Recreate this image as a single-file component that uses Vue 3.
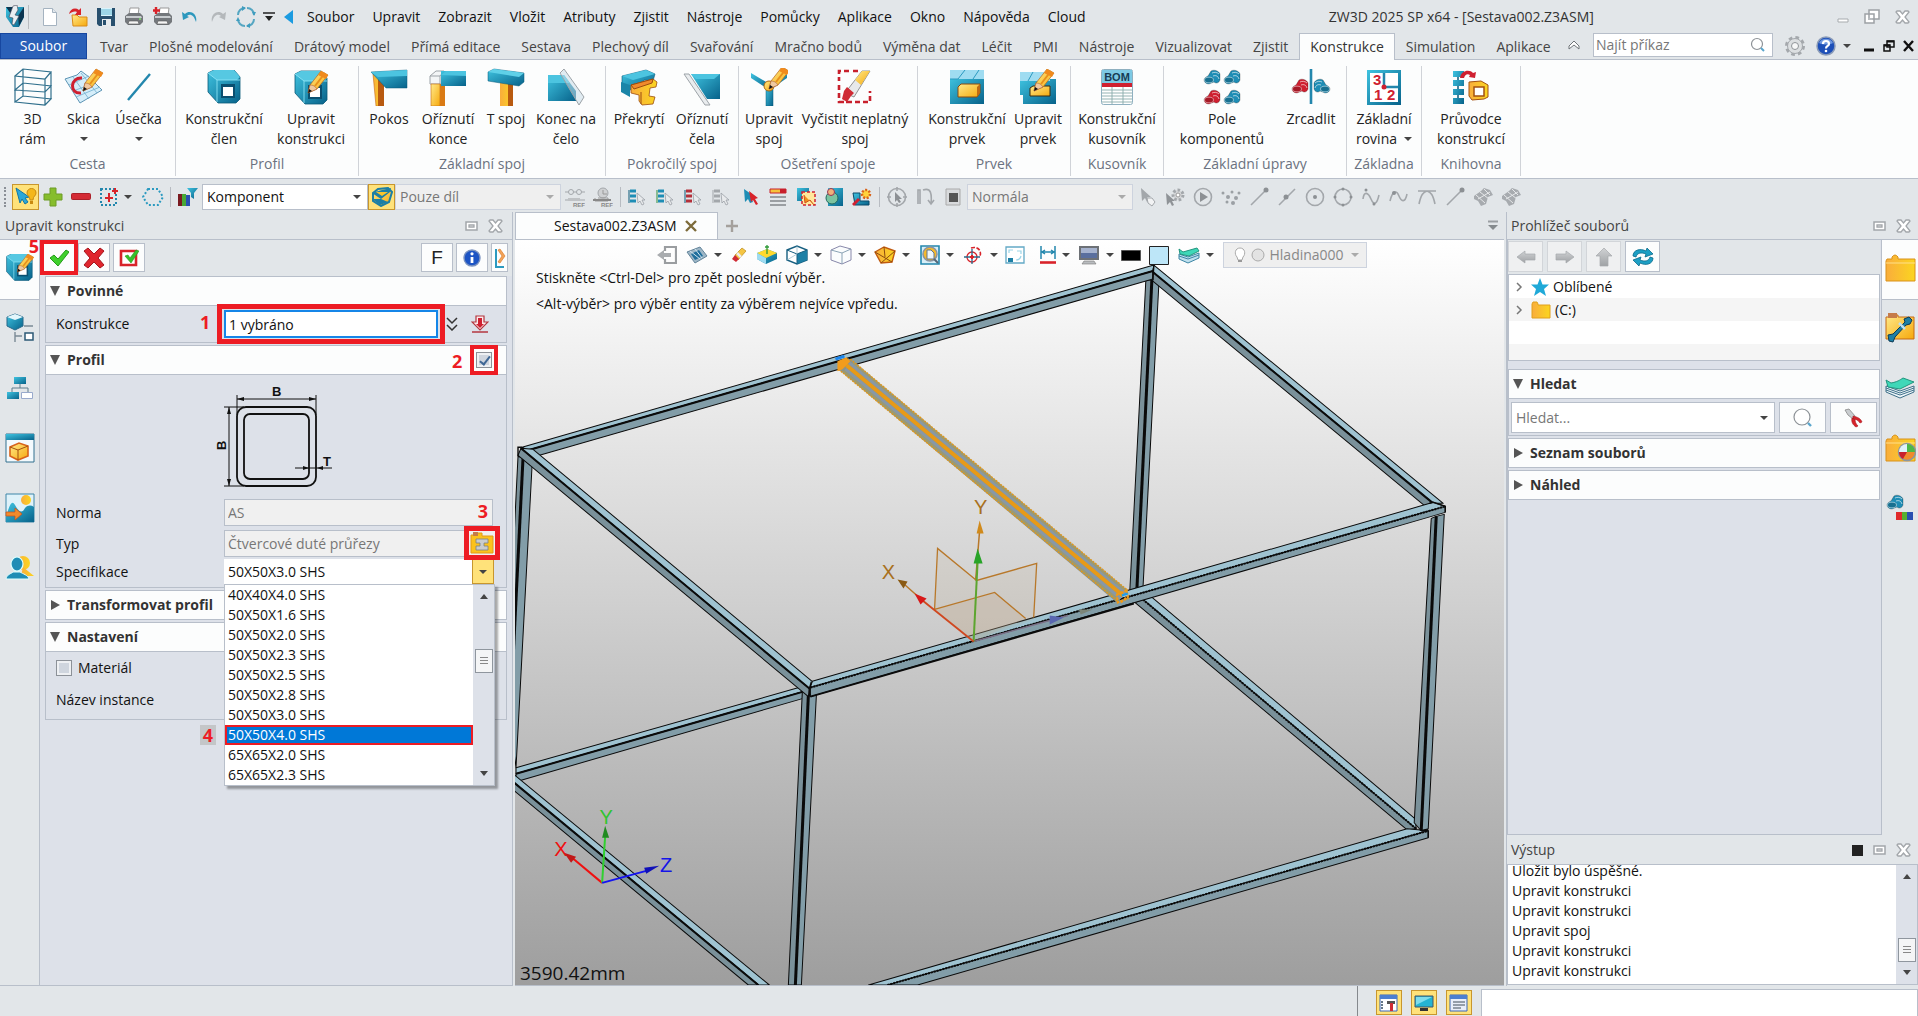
<script setup>
import { h } from 'vue'

const C = 'fill="url(#gc)"'
const Y = 'fill="url(#gy)"'
const O = 'fill="url(#go)"'
const G = 'fill="url(#gg)"'
const pencil = (x, y) => `<g transform="translate(${x} ${y})"><path d="M0 20l2-8L13-2l7 4-11 14z" fill="url(#gy)" stroke="#b5651d" stroke-width=".7"/><path d="M7 13L17 0" stroke="#e8901c" stroke-width="2"/><path d="M13-2l7 4-2 4-8-4z" fill="#f08a1c"/><path d="M0 20l2-8c3 0 5 1 7 4z" fill="#f0c9a0" stroke="#a0522d" stroke-width=".5"/><path d="M0 20l1-4 3 2z" fill="#111"/></g>`
const cube = `<path d="M2 3l6-3h20l6 7v22l-4 4H12L2 22z" fill="url(#gc)" stroke="#0b5a7a" stroke-width=".8"/><path d="M2 3l6-3h20l6 7-3 3H11z" fill="#56c8e2"/><path d="M2 3l9 7v22M11 10h23" fill="none" stroke="#8be3f5" stroke-width=".9"/><path d="M15 14h14v14H15z" fill="#0a4f70"/><path d="M17 17h10v9H17z" fill="#fff"/>`
const bolt = (x, y, f) => `<g transform="translate(${x} ${y})"><path d="M7 1c3-2 8 0 9 3v6c-1 3-4 4-6 2l-5 2c-3 0-5-2-5-4s2-3 4-4z" fill="${f}" stroke="#0006" stroke-width=".6"/><ellipse cx="5" cy="10" rx="4.500" ry="2.800" fill="#0003" stroke="#fff9" stroke-width=".8"/><path d="M8 3c2-1 5-1 7 1M9 6c3-1 5 0 6 3" stroke="#fff9" fill="none"/></g>`
const tree = (a, b) => `<g stroke="${a}" stroke-width="3"><path d="M2 4h6M2 9h6M2 14h6"/></g><path d="M1 3v13" stroke="${b}"/><path d="M9 6l1 10 2-2 2 4 2-1-2-4h3z" fill="#e8eaec" stroke="#9aa0a6" stroke-width=".8"/>`
const g = 'fill="none" stroke="#a3a7ab" stroke-width="1.6"'
const folder = `<path d="M1 7l1-2h5V3q3-4 6 0v2h17v22H1z" ${O} stroke="#d9921a" stroke-width="1"/><path d="M1 9h29" stroke="#ffe08a"/>`
const mesh = `<path d="M1 9l7-5 3-3 6 2 3 5-5 2-2 7-5 2-3-5-4-2z" fill="#a7abaf"/><path d="M3 8l9 8M7 5l9 7M11 2l6 6M5 12l12-7" stroke="#e6e8ea"/>`

const icons = {
  logo: [20, 24, `<path d="M1 2h18v10l-5 10H8L1 12z" ${C}/><path d="M1 2h7l3 4-3 6zM19 2l-6 9 1 10 5-9z" fill="#0b3550"/><path d="M8 1l4-1 1 5-3 5 4 1-5 9-2-1 1-6-4-1z" fill="#e9eef2" stroke="#445" stroke-width=".6"/>`],
  file: [14, 18, '<path d="M.5.5h9l4 4v13H.5z" fill="#fff" stroke="#a5b3c0"/><path d="M9.500.5v4h4" fill="#e4e9ee" stroke="#a5b3c0"/>'],
  open: [20, 20, `<path d="M4 8h5l2 2h8v9H5z" ${Y} stroke="#d98b18"/><path d="M1 7C2 2 7 0 11 3l2-2v7H7l2-3C6 4 4 5 1 7z" fill="#d8232a"/>`],
  save: [20, 20, `<path d="M1 1h18v18H3l-2-2z" fill="#28506e"/><path d="M5 1h11v8H5z" fill="#d9f3fb"/><path d="M5 3h11M5 5h11M5 7h11" stroke="#63b9d4"/><path d="M6 12h9v7H6z" fill="#e6eaed"/><path d="M7 13h3v5H7z" fill="#28506e"/>`],
  print: [20, 20, '<path d="M6 1h9l-1 7H5z" fill="#fff" stroke="#999"/><path d="M1 9l4-3h11l3 3v6l-3 3H4l-3-3z" fill="#74787c"/><path d="M2 9h15l1 2H2z" fill="#c9cdd0"/><path d="M5 14h9l1 3H4z" fill="#f5f5f5" stroke="#555" stroke-width=".6"/><circle cx="16" cy="12" r="1" fill="#7be06d"/>'],
  printadd: [21, 20, '<path d="M8 1h9l-1 7H7z" fill="#fff" stroke="#999"/><path d="M2 9l4-3h11l3 3v6l-3 3H5l-3-3z" fill="#74787c"/><path d="M3 9h15l1 2H3z" fill="#c9cdd0"/><path d="M6 14h9l1 3H5z" fill="#f5f5f5" stroke="#555" stroke-width=".6"/><path d="M4 0v7M1 3.500h7" stroke="#d8232a" stroke-width="2.400"/>'],
  undo: [18, 14, '<path d="M1 2l1 8 6-3-2-1c3-3 7-1 9 6 2-8-6-13-11-8z" fill="#2d98bd"/>'],
  redo: [18, 14, '<path d="M17 2l-1 8-6-3 2-1C9 3 5 5 3 12 1 4 9-1 14 4z" fill="#b4b8bb"/>'],
  sync: [22, 22, '<path d="M3 9C3 5 6 2 10 2M12 2c4 0 7 3 7 7M19 13c0 4-3 7-7 7M10 20c-4 0-7-3-7-7" fill="none" stroke="#55a6c2" stroke-width="2"/><path d="M7 0l4 2-4 3zM17 6l4 0-2 4zM15 17l-4 3 4 2zM1 15l4 0-2-4z" fill="#3f9dbf"/>'],
  qat: [12, 10, '<path d="M0 1h12" stroke="#222" stroke-width="1.500"/><path d="M2 4h8l-4 5z" fill="#222"/>'],
  tri: [10, 14, '<path d="M9 0v14L0 7z" fill="#1b9be0"/>'],
  wmin: [12, 14, '<path d="M1 9h10v3H1z" fill="#fff" stroke="#a7abae"/>'],
  wrest: [16, 16, '<path d="M5 1h10v9H5zM1 5h9v9H1z" fill="#fff" stroke="#9da1a5" stroke-width="1.500"/><path d="M4 9h4v2H4z" fill="#b9bdc1"/>'],
  x3: [15, 14, '<path d="M2 1h3l2.500 3L10 1h3l1 1-4 5 4 5-1 1h-3l-2.500-3L5 13H2l-1-1 4-5-4-5z" fill="#fff" stroke="#a2a6aa" stroke-width="1.300"/>'],
  dock: [13, 10, '<path d="M1 1h11v8H1z" fill="#fff" stroke="#a2a6aa" stroke-width="1.500"/><path d="M4 4h5v2H4z" fill="none" stroke="#a2a6aa" stroke-width="1.300"/>'],
  stop: [11, 11, '<path d="M0 0h11v11H0z" fill="#222"/>'],
  up: [14, 14, '<path d="M2 7l5-5 5 5v3L7 6l-5 4z" fill="#fff" stroke="#6f7478"/>'],
  lens: [16, 16, '<circle cx="7" cy="7" r="5.500" fill="#fff" stroke="#8d9297" stroke-width="1.200"/><path d="M11 11l3 3" stroke="#5aa5cc" stroke-width="2"/>'],
  lens2: [20, 20, '<circle cx="9" cy="9" r="8" fill="#fff" stroke="#8d9297" stroke-width="1.200"/><path d="M15 15l3 3" stroke="#5aa5cc" stroke-width="2.400"/>'],
  gear: [22, 22, '<circle cx="11" cy="11" r="8.500" fill="none" stroke="#a4a8ac" stroke-width="3" stroke-dasharray="3.600 3.100"/><circle cx="11" cy="11" r="7.500" fill="#dcdfe1" stroke="#a4a8ac"/><circle cx="11" cy="11" r="3.500" fill="#f6f7f7" stroke="#8f9498"/>'],
  help: [20, 20, '<circle cx="10" cy="10" r="9" fill="#1d4fb8" stroke="#8a9bb8" stroke-width="1.500"/><path d="M3 7a8 8 0 0 1 14 0c-4 2-10 2-14 0z" fill="#6f98e0"/><path d="M7 8c0-4 6-4 6 0 0 2-3 2-3 4.500" fill="none" stroke="#fff" stroke-width="2.200"/><circle cx="10" cy="15" r="1.300" fill="#fff"/>'],
  bmin: [12, 14, '<path d="M1 11h10" stroke="#111" stroke-width="3"/>'],
  brest: [12, 14, '<path d="M4 2h7v6H4zM1 6h6v6H1z" fill="#e2e6e9" stroke="#111" stroke-width="1.500"/><path d="M4 2.500h7M1 6.500h6" stroke="#111" stroke-width="2"/>'],
  bx: [12, 12, '<path d="M1 1l9 10M10 1L1 11" stroke="#111" stroke-width="2.400"/>'],

  r3d: [38, 38, '<path d="M1 8l8-7 28 3-6 7zM1 22l30 2 6-6-28-3zM1 34l30 3 6-6-28-3zM1 8v26M31 11v26M37 4v27M9 1v27" fill="none" stroke="#2f6f8c" stroke-width="1.200"/>'],
  rsk: [40, 38, `<path d="M1 11l12-4 4-4 8 6 13 13-22 13z" fill="#d5eefa" stroke="#5e95b5"/><path d="M5 17l20-9M9 23l22-8M12 29l24-10M9 9l16 22M17 5l16 20" stroke="#7cb6d3" stroke-width=".9"/><path d="M18 10c-12-1-13 16-1 15" fill="none" stroke="#cf2030" stroke-width="3"/>${pencil(19, 3)}`],
  rln: [26, 30, '<path d="M2 28L24 2" stroke="#2387ad" stroke-width="2.400"/>'],
  rmb: [36, 34, cube],
  red: [36, 36, `<g transform="translate(0 2)">${cube}</g>${pencil(15, 4)}`],
  rpk: [38, 38, `<path d="M3 6l3-2 7 7v27H6z" ${O} stroke="#c56a14" stroke-width=".6"/><path d="M8 8l6 5v25H8z" fill="#b85a10"/><path d="M1 4l36-2v18H16z" ${C} stroke="#0b5a7a" stroke-width=".5"/><path d="M1 4l36-2v6L8 9z" fill="#4cc4e0"/>`],
  roz: [38, 38, `<path d="M1 8l6-5h8v13H1z" fill="#f3f5f6" stroke="#9da3a8"/><path d="M1 8h10v8M11 8l4-5" fill="none" stroke="#9da3a8"/><path d="M2 16h9v22H2z" ${Y} stroke="#c56a14" stroke-width=".6"/><path d="M11 16h5v22h-5z" fill="#d97a14"/><path d="M12 3h25v15H12z" ${C}/><path d="M12 7l5-4h20v5z" fill="#4cc4e0"/>`],
  rt: [38, 38, `<path d="M13 14h13v24H13z" ${O}/><path d="M21 14h5v24h-5z" fill="#b85a10"/><path d="M1 4l6-3 30 4v9l-5 4-31-5z" ${C} stroke="#0b5a7a" stroke-width=".5"/><path d="M1 4l6-3 30 4-5 4z" fill="#5fd0e8"/>`],
  rkc: [38, 38, `<path d="M1 7h16l12 16v10H1z" ${C}/><path d="M1 7h16l6 8H1z" fill="#4cc4e0"/><path d="M13 5l4-4 20 28-5 8z" fill="#c6dbe688" stroke="#9da3a8"/>`],
  rpr: [38, 38, `<path d="M2 8l24-6 9 4-2 7-9-1-1 14-9-3-12-4z" ${C} stroke="#0b5a7a" stroke-width=".6"/><path d="M2 8l24-6 9 4-22 6z" fill="#4cc4e0"/><path d="M1 14l9 3v12L1 24z" fill="#1b85a8"/><path d="M11 17l22-6 4 3-1 5-6 1-1 8 6 1-2 7-11 1-3-4v-6l-8-2z" ${O} stroke="#9c4c10" stroke-width=".8"/><path d="M11 17l22-6-1 4-18 6zM21 24v12" stroke="#9c4c10" fill="#f08a2c"/>`],
  roc: [38, 38, `<path d="M8 6h29v25H24z" ${C}/><path d="M8 6h29l-6 5H13z" fill="#4cc4e0"/><path d="M1 6h5l21 31h-5z" fill="#e3e7eacc" stroke="#9da3a8"/>`],
  rus: [38, 38, `<path d="M1 5l17 10v6L1 10z" ${C}/><path d="M37 5L21 15v6l16-11z" ${C}/><path d="M16 18h7v20h-7z" ${C} stroke="#0b5a7a" stroke-width=".5"/><circle cx="19" cy="18" r="5" ${Y} stroke="#a96512"/>${pencil(19, 1)}`],
  rvy: [36, 36, `<path d="M12 2H2v10M2 16v17h10M2 33h31V22M16 2h8" fill="none" stroke="#c8202c" stroke-width="2.600" stroke-dasharray="5 3"/><path d="M8 24L25 2h8L17 28z" fill="#e7e9ea" stroke="#777" stroke-width=".8"/><path d="M18 11l7-9h8l-9 14z" ${Y}/><path d="M7 22l3-4 7 6-3 3-4 6-5-3z" fill="#cf2b34"/>`],
  rkp: [36, 36, `<path d="M1 8h34v27H1z" ${C}/><path d="M1 1h34v9H1z" fill="#9fdcf1"/><path d="M16 1L9 10H1M30 1l-6 9" stroke="#2b9ac0" fill="none"/><path d="M9 18l3-3h19v9l-3 4H9z" ${Y} stroke="#8a4a10"/><path d="M28 18v10l3-4v-9z" fill="#c06a12"/>`],
  rup: [38, 36, `<path d="M1 10h36v25H4v-9H1z" ${C}/><path d="M1 3h30v9H1z" fill="#9fdcf1"/><path d="M14 3L9 12" stroke="#2b9ac0"/><path d="M11 19l3-2h17v10H11z" ${Y} stroke="#3b2b10"/>${pencil(15, 2)}`],
  rbom: [32, 36, '<rect x=".5" y=".5" width="31" height="35" rx="2" fill="#fff" stroke="#8fb0c0"/><path d="M1 1h30v13H1z" fill="#7cc9e4"/><text x="16" y="12" font-family="Liberation Sans" font-size="11" font-weight="700" text-anchor="middle" fill="#173c55">BOM</text><path d="M1 14h30v4H1z" fill="#cf2030"/><path d="M1 21h30M1 24h30M1 27h30M1 30h30M1 33h30M11 18v17M22 18v17" stroke="#8aa" stroke-width=".9"/>'],
  rpo: [38, 36, bolt(1, 1, '#1e8db5') + bolt(21, 1, '#1e8db5') + bolt(1, 21, '#cf2030') + bolt(21, 21, '#1e8db5')],
  rzr: [40, 36, bolt(1, 10, '#cf2030') + '<g transform="translate(40 0) scale(-1 1)">' + bolt(1, 10, '#1e8db5') + '</g><path d="M20 0v35" stroke="#2387ad" stroke-width="2.600"/>'],
  rzk: [36, 36, `<path d="M1 1h34v35H1z" ${C}/><path d="M4 4h28v29H4z" fill="#fff"/><path d="M18 4v14h14" fill="none" stroke="#2387ad" stroke-width="2.500"/><g font-family="Liberation Sans" font-weight="700" font-size="15" fill="#cf2030"><text x="7" y="16">3</text><text x="8" y="31">1</text><text x="21" y="31">2</text></g><circle cx="18" cy="18" r="2.500" fill="#cf2030"/>`],
  rpv: [38, 36, `<path d="M6 2v32" stroke="#0b5a7a" stroke-width="1.500"/><path d="M1 2h11v6H1zM1 11h11v6H1zM1 20h11v6H1zM1 29h11v6H1z" ${C}/><path d="M8 9C9 1 18 0 21 4l3-1-1 6-6-1 1-2c-3-2-5 0-6 3z" fill="#cf2030"/><path d="M17 13l12-1 7 4v12l-4 2-12 1-3-4z" ${O} stroke="#a3500f"/><path d="M22 18h10v9H22z" fill="#fff" stroke="#a3500f" stroke-width="1.500"/>`],

  t1: [22, 20, `<path d="M1 1l4 15 2-4 3 5 3-2-3-4 4-1z" fill="#2aa7d8" stroke="#1377a4"/><path d="M12 6c0-6 9-6 9 0 0 3-3 3-3 7h-3c0-4-3-4-3-7z" fill="#f4b71b" stroke="#c98a10"/><path d="M15 14h3v3h-3z" fill="#c98a10"/>`],
  plus: [20, 20, '<path d="M7 1h6v6h6v6h-6v6H7v-6H1V7h6z" fill="#86bd2c" stroke="#6d9c26"/>'],
  minus: [20, 8, '<rect x=".5" y=".5" width="19" height="6" rx="1" fill="#d42b35" stroke="#ab2029"/>'],
  sel: [20, 20, '<path d="M2 2h15v16H2z" fill="none" stroke="#2387ad" stroke-width="2" stroke-dasharray="2 2"/><path d="M10 6v9M6 11h8M16 1v6M13 4h6" stroke="#d8232a" stroke-width="2"/>'],
  hex: [22, 20, '<path d="M6 2h10l5 8-5 8H6l-5-8z" fill="none" stroke="#2b9ac0" stroke-width="2" stroke-dasharray="2 2"/>'],
  filt: [22, 20, `<path d="M1 7h5v12H1z" fill="#7a1a20"/><path d="M5 7h4v12H5z" fill="#49a835"/><path d="M9 8h4v11H9z" fill="#2a4fb0"/><path d="M10 1h11l-4 5v6l-3-2V6z" ${C}/>`],
  part: [22, 20, `<path d="M2 6l5-4 10-1 4 4-3 10-8 4-8-5z" ${Y} stroke="#1d7fa5" stroke-width="2"/><path d="M1 6l9 6 9-7 1-4-9 2zM1 12l8 6 8-3-7-3z" fill="#1d7fa5"/><path d="M5 5l6 4 6-4" fill="#f9c52c"/>`],
  ref1: [20, 20, '<path d="M0 5h20M0 13h20" stroke="#a3a7ab"/><circle cx="6" cy="5" r="2.500" fill="#e2e6e9" stroke="#a3a7ab"/><circle cx="14" cy="5" r="2.500" fill="#e2e6e9" stroke="#a3a7ab"/><text x="8" y="20" font-size="6" font-weight="700" font-family="Liberation Sans" fill="#888">REF</text><path d="M3 11h12v3H3z" fill="#bfc2c5"/>'],
  ref2: [20, 20, '<circle cx="10" cy="6" r="5" fill="#cfd1d3" stroke="#a3a7ab"/><path d="M10 3v4h4M5 11h10v3H2v-3" stroke="#999" fill="none"/><path d="M0 13h18" stroke="#888" stroke-width="2"/><text x="8" y="20" font-size="6" font-weight="700" font-family="Liberation Sans" fill="#888">REF</text>'],
  k1: [20, 20, tree('#1e8db5', '#0b5a7a')], k2: [20, 20, tree('#1e8db5', '#2f8f3a')], k3: [20, 20, tree('#b4303a', '#0b5a7a')], k4: [20, 20, tree('#a3a7ab', '#a3a7ab')],
  ptr: [20, 20, '<path d="M4 2l1 13 3-3 2 4 3-1-2-5 3-1z" fill="#1e8db5"/><path d="M9 4l2 11 2-2 3 5 2-1-3-5 3-1z" fill="#d8232a"/>'],
  lst: [18, 18, '<path d="M1 1h16v4H1z" fill="#f6c33b" stroke="#c8202c"/><path d="M11 1h6v4h-6z" fill="#c8202c"/><path d="M1 9h16M1 13h16M1 17h16" stroke="#9a9ea2" stroke-width="2"/>'],
  s1: [20, 20, `<path d="M1 1h12v13H1z" ${C}/><path d="M6 5h13v13H6z" fill="#ffe79b" stroke="#cf2030" stroke-dasharray="3 2" stroke-width="1.500"/><path d="M8 8l1 8 5-3 4 5" fill="#f0921c" stroke="#cf5020"/>`],
  s2: [20, 20, `<path d="M4 1h15v18H4z" ${C}/><circle cx="8" cy="11" r="6" fill="#7cc4a0" stroke="#22695f"/><circle cx="7" cy="5" r="3.500" fill="#f1b27a" stroke="#935"/>`],
  s3: [20, 20, `<path d="M1 6h7v8h9v4H3z" ${C} stroke="#0b4a6a"/><path d="M1 18l6-6" stroke="#cf2030" stroke-width="3"/><circle cx="14" cy="7" r="4" fill="#ffd23b" stroke="#d8631b" stroke-width="2.500" stroke-dasharray="2 1.500"/>`],
  g1: [22, 22, `<circle cx="11" cy="11" r="8.500" ${g}/><path d="M11 1v4M11 17v4M1 11h4M17 11h4" ${g}/><path d="M9 6v10l2-2 2 3 2-1-2-3h3z" fill="#8c9094"/>`],
  g2: [20, 20, `<path d="M3 17V3h2v14M8 3c8-3 9 4 8 14M13 13l3 4 3-4" ${g}/>`],
  g3: [18, 18, '<path d="M2 1h14v16H2z" fill="#d8dadc" stroke="#aaa"/><path d="M5 5h9v9H5z" fill="#555"/>'],
  g4: [20, 20, '<path d="M4 1l1 13 3-3 2 4 2-1-2-4h4z" fill="#a3a7ab"/><path d="M10 11l5 0 3 4-3 4-4-3z" fill="#f2f3f4" stroke="#a3a7ab"/>'],
  g5: [22, 20, '<path d="M2 6l1 12 3-3 2 4 2-1-2-4h3z" fill="#8f9397"/><circle cx="14" cy="8" r="5" fill="#d5d7d9" stroke="#a3a7ab" stroke-width="3" stroke-dasharray="2.500 2"/><circle cx="14" cy="8" r="2" fill="#fff" stroke="#999"/>'],
  g6: [20, 20, `<circle cx="10" cy="10" r="8.500" ${g}/><path d="M7 5l8 5-8 5z" fill="#8c9094"/>`],
  g7: [20, 20, '<g fill="#9ba0a4"><circle cx="2" cy="6" r="1.500"/><circle cx="7" cy="10" r="2"/><circle cx="11" cy="5" r="1.500"/><circle cx="18" cy="6" r="1.500"/><circle cx="15" cy="11" r="2"/><circle cx="12" cy="16" r="2"/><circle cx="6" cy="15" r="1.500"/></g>'],
  g8: [20, 20, `<path d="M2 18L18 2" ${g}/><circle cx="17" cy="3" r="2.500" fill="#8c9094"/>`],
  g9: [20, 20, `<path d="M2 18L18 2" ${g}/><circle cx="9" cy="10" r="2.500" fill="#8c9094"/>`],
  g10: [20, 20, `<circle cx="10" cy="10" r="8.500" ${g}/><circle cx="10" cy="10" r="2" fill="#8c9094"/>`],
  g11: [20, 20, `<circle cx="10" cy="10" r="8" ${g}/><g fill="#8c9094"><circle cx="10" cy="2" r="1.500"/><circle cx="10" cy="18" r="1.500"/><circle cx="2" cy="10" r="1.500"/><circle cx="18" cy="10" r="1.500"/></g>`],
  g12: [20, 20, `<path d="M2 12c1-8 5-7 8 0s6 5 8-4" ${g}/><circle cx="5" cy="3" r="1.500" fill="#8c9094"/><circle cx="13" cy="17" r="1.500" fill="#8c9094"/>`],
  g13: [20, 20, `<path d="M1 14C4 2 8 4 10 9s6 8 8-2" ${g}/><circle cx="5" cy="6" r="2" fill="#8c9094"/>`],
  g14: [20, 20, `<path d="M1 4h18M2 17C4 8 6 5 10 4c4 1 6 4 8 13" ${g}/>`],
  g15: [20, 20, mesh], g16: [20, 20, mesh],

  ok: [20, 18, '<path d="M1 9l4-3 4 4 8-9 3 2L9 17z" fill="#3fd02c" stroke="#259a1a"/>'],
  cancel: [22, 22, '<path d="M1 4l4-3 6 6 6-6 4 3-6 7 6 7-4 3-6-6-6 6-4-3 6-7z" fill="#e0262e" stroke="#a5161d"/>'],
  apply: [20, 20, '<path d="M2 3h15v14H2z" fill="#fff" stroke="#d8232a" stroke-width="2.600"/><path d="M6 8l3-1 2 3 6-8 3 1-8 12z" fill="#35c12b" stroke="#259a1a" stroke-width=".6"/>'],
  info: [18, 18, '<circle cx="9" cy="9" r="8" fill="#1c54c4" stroke="#7b93c0" stroke-width="1.400"/><path d="M9 8v6" stroke="#fff" stroke-width="2.800"/><circle cx="9" cy="4.800" r="1.600" fill="#fff"/>'],
  fold: [12, 22, '<path d="M2 2v18h8" fill="none" stroke="#2b9ac0" stroke-width="2"/><path d="M4 3l4 6-4 6 2 1 5-7-5-7z" fill="#f2a45a" stroke="#d8721c" stroke-width=".6"/>'],
  down2: [12, 14, '<path d="M1 1l5 5 5-5M1 8l5 5 5-5" fill="none" stroke="#333" stroke-width="1.500"/>'],
  pick: [18, 18, '<path d="M5 1h8v6h4l-8 8-8-8h4z" fill="#fbe9ea" stroke="#b3363f" stroke-width="1.200"/><path d="M7 3h4v6h2l-4 4-4-4h2z" fill="#cf2030"/><path d="M1 17h16" stroke="#b3363f" stroke-width="1.500"/>'],
  book: [24, 22, `<path d="M1 3h6V1h5v3h11v17H1z" fill="#fbc21c" stroke="#e29a18"/><path d="M3 0h5v4H3z" fill="#c57b4a"/><path d="M6 7h12v4h-4v3h4v4H6v-4h4v-3H6z" fill="#c9ccce" stroke="#7c8084" stroke-width=".8"/>`],

  p1: [30, 28, `<g transform="scale(.8)">${cube}</g><g transform="scale(.82)">${pencil(15, 2)}</g>`],
  p2: [28, 30, `<path d="M1 4l8-3 8 3v9l-8 4-8-4z" ${C} stroke="#27698a"/><path d="M1 4l8-3 8 3-8 3z" fill="#e4f6fb"/><path d="M18 13h9M9 19v10M9 23h7" stroke="#7b8a95" stroke-width="1.400"/><path d="M19 20h8v7h-8z" fill="#fff" stroke="#2d5a75" stroke-width="1.500"/>`],
  p3: [28, 24, `<path d="M8 1h12v7H8z" ${C}/><path d="M14 8v4M6 16v-4h16v4" fill="none" stroke="#5f7c8c"/><path d="M1 16h12v7H1z" ${C}/><path d="M15.500 16.500h11v6h-11z" fill="#fff" stroke="#9ac"/>`],
  p4: [30, 30, `<path d="M1 1h28v28H1z" fill="#f4fafd" stroke="#33718f"/><path d="M1 1h28v6H1z" ${C}/><path d="M5 14l9-4 9 3v10l-10 4-8-4z" ${Y} stroke="#d8631b" stroke-width="1.600"/><path d="M5 14l8 3 10-4M13 17v10" stroke="#a3500f" fill="none"/>`],
  p5: [30, 30, `<path d="M1 1h28v28H1z" fill="#dff2fa" stroke="#3e86a8"/><path d="M1 24c4-14 6-17 9-12 4 7 7 9 10 3 3-3 6-3 9-1v15H1z" ${C}/><circle cx="21" cy="7" r="5" ${O}/><path d="M1 19h9v-4l7 6-7 6v-4H1z" fill="#f08a2c" stroke="#c9501a" stroke-width=".7"/>`],
  p6: [30, 26, `<circle cx="18" cy="8" r="7" ${O}/><path d="M18 12l11 9-13 0z" ${O}/><ellipse cx="12" cy="9" rx="6" ry="7" fill="#1e8db5" stroke="#dff" stroke-width="1.200"/><path d="M1 24c1-5 5-5 7-7h7c3 2 8 3 9 7z" fill="#1e8db5" stroke="#dff"/>`],

  v1: [20, 18, '<path d="M8 5V1h11v16H8v-4" fill="none" stroke="#9a9da0" stroke-width="2.200"/><path d="M0 9l7-5v3h7v4H7v3z" fill="#a9acaf"/>'],
  v2: [22, 18, '<path d="M1 6l13-5 7 9-12 7z" fill="#9db6c6" stroke="#63849a"/><path d="M5 8l8-4 4 6-8 4z" fill="#1f6e9c"/><path d="M4 5l10 8M9 3l7 9" stroke="#cfe4ef"/>'],
  v3: [16, 16, '<path d="M4 8l7-7 4 3-8 9z" fill="#f5c542" stroke="#b98a1c" stroke-width=".7"/><path d="M6 6l4 4" stroke="#eee" stroke-width="2.500"/><path d="M1 12l3-4 4 4-3 3z" fill="#cf2b34"/>'],
  v4: [22, 20, `<path d="M1 8l10-4 10 4v6l-11 5-9-5z" ${C}/><path d="M1 8l10-4 10 4-11 5z" fill="#ffd92e"/><path d="M1 8v6l9 5v-6z" fill="#9fdcf1"/><path d="M11 0v9M9 2h4" stroke="#2f9a3a" stroke-width="1.300"/>`],
  v5: [22, 20, `<path d="M1 5l10-4 10 4v10l-10 4L1 15z" fill="#fff" stroke="#175f80" stroke-width="1.400"/><path d="M11 9l10-4v10l-10 4z" fill="#1d7fa5"/><path d="M1 5l10 4 10-4M11 9v10" fill="none" stroke="#175f80"/><path d="M11 1v8M1 15l10-6" fill="none" stroke="#8fb6c6" stroke-width=".7"/>`],
  v6: [22, 20, '<path d="M1 5l9-4 11 3v11l-9 4-11-4z" fill="#fafcfd" stroke="#88a" /><path d="M1 5l11 3 9-4M12 8v11" fill="none" stroke="#8aa3b5"/>'],
  v7: [22, 18, `<path d="M1 6l9-5 11 4-3 11-11 1z" ${O} stroke="#c05a10" stroke-width="1.400"/><path d="M1 6l17 10M21 5L7 17M10 1l1 10" stroke="#8a4a10"/>`],
  v8: [20, 20, '<path d="M1 1h18v18H1z" fill="#d7eef7" stroke="#2387ad" stroke-width="1.600"/><circle cx="10" cy="9" r="7" fill="#f6b92a" stroke="#8a93a0" stroke-width="1.500"/><path d="M7 5h4l3 3v6H7z" fill="#eef6fa" stroke="#678"/><path d="M14 14l4 4" stroke="#567" stroke-width="2"/>'],
  v9: [20, 18, '<circle cx="8" cy="11" r="5" fill="none" stroke="#d8232a" stroke-width="1.300"/><path d="M8 3v15M0 11h16" stroke="#27698a" stroke-width="1.300"/><path d="M8 9v4M6 11h4" stroke="#d8232a" stroke-width="2"/><path d="M7 2c6-2 11 2 9 8" fill="none" stroke="#d8232a" stroke-width="1.600" stroke-dasharray="4 1.500"/>'],
  v10: [20, 18, '<path d="M1 1h18v16H1z" fill="#fff" stroke="#63a9c6" stroke-width="1.300"/><path d="M3 12h5v4H3z" fill="#1d7fa5"/><path d="M4 7V4h4M12 5h4v3M11 14q4 0 5-4" fill="none" stroke="#9cd5e8" stroke-width="1.200"/>'],
  v11: [16, 20, '<path d="M1 1v13M15 1v13M2 7h12M5 5L2 7l3 2M11 5l3 2-3 2" fill="none" stroke="#2387ad" stroke-width="1.500"/><path d="M0 17.500h16" stroke="#d8232a" stroke-width="2.600"/>'],
  v12: [22, 20, '<path d="M1 1h20v14H1z" fill="#6d7176"/><path d="M3 3h16v10H3z" fill="#5a6f9e"/><path d="M3 3h16v5H3z" fill="#a6b3cf"/><path d="M6 16h10l2 3H4z" fill="#b9bcbf" stroke="#777" stroke-width=".6"/>'],
  v13: [20, 11, '<path d="M.5.5h19v10H.5z" fill="#000" stroke="#555"/>'],
  v14: [20, 19, '<path d="M.5.5h19v18H.5z" fill="#bde6f8" stroke="#222"/>'],
  v15: [22, 18, '<path d="M1 8l9 3 11-4v5l-11 5-9-4z" fill="#bfe0ee" stroke="#3d86a5"/><path d="M1 10l9 3 11-4" fill="none" stroke="#3d86a5"/><path d="M1 3l4 3 14-4 2 3-10 5-9-2z" fill="#3fd8b8" stroke="#23957e"/>'],
  v16: [12, 16, '<path d="M3 10C0 7 1 1 6 1s6 6 3 9l-1 3H4z" fill="#fff" stroke="#aaa"/><path d="M4 14h4" stroke="#999" stroke-width="2"/>'],
  v17: [14, 14, '<circle cx="7" cy="7" r="6" fill="#e3e3e3" stroke="#aaa"/>'],
  over: [10, 11, '<path d="M0 1.500h10" stroke="#9a9ea2" stroke-width="2"/><path d="M0 5h10l-5 5z" fill="#858a8e"/>'],
  tabx: [12, 12, '<path d="M1 1l10 10M11 1L1 11" stroke="#7d6b3a" stroke-width="2.400"/>'],
  tabp: [12, 12, '<path d="M6 0v12M0 6h12" stroke="#a4a09c" stroke-width="2.400"/>'],

  f1: [20, 16, `<path d="M1 8l8-6v3h10v6H9v3z" ${G} stroke="#a6a9ac" stroke-width=".7"/>`],
  f2: [20, 16, `<path d="M19 8l-8-6v3H1v6h10v3z" ${G} stroke="#a6a9ac" stroke-width=".7"/>`],
  f3: [18, 20, `<path d="M9 1l8 8h-4v10H5V9H1z" ${G} stroke="#a6a9ac" stroke-width=".7"/>`],
  f4: [22, 20, '<path d="M1 9C1 3 8 1 14 4l1-3 6 6-8 3 1-3C9 5 5 6 4 10z" fill="#1c9fc4" stroke="#0b6a8a" stroke-width=".8"/><path d="M21 11c0 6-7 8-13 5l-1 3-6-6 8-3-1 3c5 2 9 1 10-3z" fill="#1c9fc4" stroke="#0b6a8a" stroke-width=".8"/>'],
  star: [18, 18, '<path d="M9 0l2.500 6.500H18l-5 4.500 2 7-6-4-6 4 2-7-5-4.500h6.500z" fill="#1fa9d8"/>'],
  dir: [20, 18, `<path d="M1 3l1-2h4l1 2v1h12v13H1z" ${O} stroke="#e0a01c"/>`],
  chev: [8, 10, '<path d="M2 1l4 4-4 4" fill="none" stroke="#777" stroke-width="1.500"/>'],
  plier: [20, 20, '<path d="M1 2l4-1 6 7-2 3-5-4z" fill="#c9cdd0" stroke="#888" stroke-width=".8"/><path d="M9 8c5 1 8 3 9 6l-2 1c-2-3-4-4-7-4zM8 10c-1 4 1 7 4 9l2-1c-2-2-3-4-3-7z" fill="#d8232a" stroke="#a5161d" stroke-width=".6"/>'],
  q1: [31, 28, folder],
  q2: [30, 30, `<path d="M1 4h8V2h4v2h16v22H1z" ${Y} stroke="#c56a14"/><path d="M3 0h9v5H3z" fill="#c57b4a"/><path d="M3 22l5-1 12-12-1-3 5-2 3 3-2 4-4 1L10 24l-2 5-4-1z" fill="#1d7fa5" stroke="#0b3a55"/><path d="M14 10l6 6" stroke="#bfe0ee" stroke-width="2.500"/>`],
  q3: [30, 22, '<path d="M1 9l14 5 14-5v6l-14 6-14-6z" fill="#eef6fa" stroke="#3d6f88"/><path d="M1 11l14 5 14-5M1 13l14 5 14-5" fill="none" stroke="#3d6f88"/><path d="M1 3l5 3c6-1 9-3 12-5l11 4-14 7-12-2z" fill="#3fd8b8" stroke="#23957e"/>'],
  q4: [31, 28, folder + '<circle cx="22" cy="18" r="8.500" fill="#f08a2c" stroke="#8a97a0" stroke-width="1.500"/><path d="M22 18V10a8 8 0 0 1 8 8z" fill="#4cb848"/><path d="M22 18h-8a8 8 0 0 1 8-8z" fill="#dff2fa"/><path d="M22 18h-8a8 8 0 0 0 4 7z" fill="#c8202c"/>'],
  q5: [28, 28, bolt(1, 1, '#1e8db5') + '<path d="M10 18h6v8h-6z" fill="#e02a2a"/><path d="M16 18h5v8h-5z" fill="#57b030"/><path d="M21 18h6v8h-6z" fill="#2a4fb0"/>'],
  st1: [20, 18, '<path d="M1 1h17v16H1z" fill="#fff" stroke="#3a66b5"/><path d="M1 1h17v4H1z" fill="#4d7fd0"/><path d="M3 7v9" stroke="#678" stroke-width="2" stroke-dasharray="2 1"/><path d="M8 7h8v3H8z" fill="#555"/><path d="M11 9h3v8h-3z" fill="#cf2b34"/>'],
  st2: [20, 16, '<path d="M1 1h18v11H1z" fill="#25b4d2" stroke="#456" stroke-width="1"/><path d="M2 2h16L2 10z" fill="#7fdcec"/><path d="M6 13h8v3H6z" fill="#333"/>'],
  st3: [20, 18, '<path d="M1 1h17v16H1z" fill="#e8eef8" stroke="#3a66b5"/><path d="M1 1h17v4H1z" fill="#4d7fd0"/><path d="M4 8h12M4 11h12M4 14h8" stroke="#78848f" stroke-width="1.300"/>'],
}

const Ico = (p) => {
  const [w, ht, m] = icons[p.n]
  return h('svg', { width: w, height: ht, viewBox: `0 0 ${w} ${ht}`, 'aria-hidden': 'true', innerHTML: m })
}
Ico.props = ['n']

const quick = ['file', 'open', 'save', 'print', 'printadd', 'undo', 'redo', 'sync']
const menus = ['Soubor', 'Upravit', 'Zobrazit', 'Vložit', 'Atributy', 'Zjistit', 'Nástroje', 'Pomůcky', 'Aplikace', 'Okno', 'Nápověda', 'Cloud']
const tabs = ['Tvar', 'Plošné modelování', 'Drátový model', 'Přímá editace', 'Sestava', 'Plechový díl', 'Svařování', 'Mračno bodů', 'Výměna dat', 'Léčit', 'PMI', 'Nástroje', 'Vizualizovat', 'Zjistit', 'Konstrukce', 'Simulation', 'Aplikace']
const groups = [
  { n: 'Cesta', w: 176, items: [['r3d', 56, '3D', 'rám'], ['rsk', 46, 'Skica', '', 1], ['rln', 64, 'Úsečka', '', 1]] },
  { n: 'Profil', w: 183, items: [['rmb', 88, 'Konstrukční', 'člen'], ['red', 86, 'Upravit', 'konstrukci']] },
  { n: 'Základní spoj', w: 247, items: [['rpk', 52, 'Pokos', ''], ['roz', 66, 'Oříznutí', 'konce'], ['rt', 50, 'T spoj', ''], ['rkc', 70, 'Konec na', 'čelo']] },
  { n: 'Pokročilý spoj', w: 133, items: [['rpr', 60, 'Překrytí', ''], ['roc', 66, 'Oříznutí', 'čela']] },
  { n: 'Ošetření spoje', w: 179, items: [['rus', 54, 'Upravit', 'spoj'], ['rvy', 118, 'Vyčistit neplatný', 'spoj']] },
  { n: 'Prvek', w: 153, items: [['rkp', 88, 'Konstrukční', 'prvek'], ['rup', 54, 'Upravit', 'prvek']] },
  { n: 'Kusovník', w: 93, items: [['rbom', 86, 'Konstrukční', 'kusovník']] },
  { n: 'Základní úpravy', w: 183, items: [['rpo', 112, 'Pole', 'komponentů'], ['rzr', 66, 'Zrcadlit', '']] },
  { n: 'Základna', w: 75, items: [['rzk', 72, 'Základní', 'rovina', 1]] },
  { n: 'Knihovna', w: 99, items: [['rpv', 90, 'Průvodce', 'konstrukcí']] },
]
const tb1 = ['k1', 'k2', 'k3', 'k4', 'ptr', 'lst', 's1', 's2', 's3']
const tb2 = ['g1', 'g2', 'g3']
const tb3 = ['g4', 'g5', 'g6', 'g7', 'g8', 'g9', 'g10', 'g11', 'g12', 'g13', 'g14', 'g8', 'g15', 'g16']
const side = ['p1', 'p2', 'p3', 'p4', 'p5', 'p6']
const rside = ['q1', 'q2', 'q3', 'q4', 'q5']
const viewTools = [['v1'], ['v2', 1], ['v3'], ['v4'], ['v5', 1], ['v6', 1], ['v7', 1], ['v8', 1], ['v9', 1], ['v10'], ['v11', 1], ['v12', 1], ['v13'], ['v14'], ['v15', 1]]
const specs = ['40X40X4.0 SHS', '50X50X1.6 SHS', '50X50X2.0 SHS', '50X50X2.3 SHS', '50X50X2.5 SHS', '50X50X2.8 SHS', '50X50X3.0 SHS', '50X50X4.0 SHS', '65X65X2.0 SHS', '65X65X2.3 SHS']
const output = ['Uložit bylo úspěšné.', 'Upravit konstrukci', 'Upravit konstrukci', 'Upravit spoj', 'Upravit konstrukci', 'Upravit konstrukci']

// Each beam: start and end of its upper edge, middle seam and lower edge, plus face colours and seam style.
const L = '#9fc3d1', M = '#829da8', D = '#7a919a'
const seam = { wide: 3, thin: 2, dash: 2, '': 2 }
const beams = [
  [516, 767, 802, 686, 516, 773, 803, 691, 516, 781, 802, 698, L, M, ''],
  [513, 773, 769, 984, 513, 781, 758, 984, 513, 789, 748, 984, L, D, 'thin'],
  [518, 456, 508, 660, 523, 458, 510, 720, 532, 466, 516, 767, D, M, 'wide'],
  [1145, 280, 1129, 590, 1151, 280, 1136, 590, 1158, 284, 1142, 590, D, M, 'wide'],
  [1150, 596, 1414, 818, 1142, 599, 1415, 828, 1134, 602, 1406, 829, L, D, 'dash'],
  [868, 984, 1406, 828, 887, 984, 1427, 830, 917, 984, 1427, 837, L, M, 'dash'],
  [1430, 518, 1413, 822, 1435, 516, 1420, 830, 1443, 514, 1427, 828, D, M, 'wide'],
  [802, 690, 788, 984, 808, 694, 795, 984, 816, 694, 801, 984, D, M, 'wide'],
  [522, 447, 1153, 265, 528, 450, 1152, 271, 536, 456, 1152, 279, L, M, ''],
  [1153, 265, 1442, 503, 1152, 272, 1432, 503, 1152, 281, 1423, 505, L, D, ''],
  [811, 681, 1432, 502, 810, 687, 1444, 506, 810, 696, 1444, 512, L, M, 'dash'],
  [533, 449, 812, 681, 521, 448, 809, 688, 518, 455, 808, 696, L, D, 'thin'],
]
</script>

<template>
  <div class="app">
    <svg class="defs" aria-hidden="true">
      <defs>
        <linearGradient id="gc" x1="0" y1="0" x2="1" y2="1"><stop offset="0" stop-color="#3fc3e0" /><stop offset="1" stop-color="#07628a" /></linearGradient>
        <linearGradient id="gy" x1="0" y1="0" x2="1" y2="1"><stop offset="0" stop-color="#ffe98a" /><stop offset="1" stop-color="#f6a90c" /></linearGradient>
        <linearGradient id="go" x1="0" y1="0" x2="1" y2="0"><stop offset="0" stop-color="#f9ad3c" /><stop offset="1" stop-color="#fbd520" /></linearGradient>
        <linearGradient id="gg" x1="0" y1="0" x2="0" y2="1"><stop offset="0" stop-color="#d0d2d4" /><stop offset="1" stop-color="#9fa2a5" /></linearGradient>
      </defs>
    </svg>

    <header class="title">
      <span class="logo"><Ico n="logo" /></span>
      <div class="quick">
        <button v-for="q in quick" :key="q" :aria-label="q"><Ico :n="q" /></button>
      </div>
      <button class="more" aria-label="Více"><Ico n="qat" /></button>
      <button class="back" aria-label="Zpět"><Ico n="tri" /></button>
      <nav class="menus"><a v-for="m in menus" :key="m" href="#">{{ m }}</a></nav>
      <h1>ZW3D 2025 SP x64 - [Sestava002.Z3ASM]</h1>
      <div class="win">
        <button aria-label="Minimalizovat"><Ico n="wmin" /></button>
        <button aria-label="Obnovit"><Ico n="wrest" /></button>
        <button aria-label="Zavřít"><Ico n="x3" /></button>
      </div>
    </header>

    <nav class="tabs">
      <button class="filetab">Soubor</button>
      <div class="tablist">
        <button v-for="(t, i) in tabs" :key="i" :class="{ on: t === 'Konstrukce' }">{{ t }}</button>
      </div>
      <button class="collapse" aria-label="Sbalit"><Ico n="up" /></button>
      <label class="find"><input type="text" placeholder="Najít příkaz" aria-label="Najít příkaz"><Ico n="lens" /></label>
      <div class="corner">
        <button aria-label="Nastavení"><Ico n="gear" /></button>
        <button class="help" aria-label="Nápověda"><Ico n="help" /><i class="caret" /></button>
        <button aria-label="Minimalizovat dokument"><Ico n="bmin" /></button>
        <button aria-label="Obnovit dokument"><Ico n="brest" /></button>
        <button aria-label="Zavřít dokument"><Ico n="bx" /></button>
      </div>
    </nav>

    <section class="ribbon">
      <div v-for="gr in groups" :key="gr.n" class="group" :style="{ width: gr.w + 'px' }">
        <div class="tools">
          <button v-for="it in gr.items" :key="it[0]" :style="{ width: it[1] + 'px' }">
            <span class="pic"><Ico :n="it[0]" /></span>
            <span class="cap">{{ it[2] }}</span>
            <span class="cap">{{ it[3] }}<i v-if="it[4]" class="caret" /></span>
          </button>
        </div>
        <span class="gname">{{ gr.n }}</span>
      </div>
    </section>

    <div class="bar">
      <i class="grip" />
      <button class="tb lit" aria-label="Výběr"><Ico n="t1" /></button>
      <button class="tb" aria-label="Přidat"><Ico n="plus" /></button>
      <button class="tb" aria-label="Odebrat"><Ico n="minus" /></button>
      <button class="tb" aria-label="Oblast"><Ico n="sel" /></button>
      <i class="caret gapr" />
      <button class="tb" aria-label="Polygon"><Ico n="hex" /></button>
      <i class="sep" />
      <button class="tb" aria-label="Filtr"><Ico n="filt" /></button>
      <span class="combo"><select aria-label="Filtr výběru"><option>Komponent</option></select><i class="caret" /></span>
      <button class="tb lit" aria-label="Díl"><Ico n="part" /></button>
      <span class="combo off"><select disabled aria-label="Rozsah"><option>Pouze díl</option></select><i class="caret" /></span>
      <button class="tb" aria-label="Reference"><Ico n="ref1" /></button>
      <button class="tb" aria-label="Historie reference"><Ico n="ref2" /></button>
      <i class="sep" />
      <button v-for="t in tb1" :key="t" class="tb" :aria-label="t"><Ico :n="t" /></button>
      <i class="sep" />
      <button v-for="t in tb2" :key="t" class="tb" :aria-label="t"><Ico :n="t" /></button>
      <span class="combo off"><select disabled aria-label="Režim"><option>Normála</option></select><i class="caret" /></span>
      <button v-for="(t, i) in tb3" :key="i" class="tb" :aria-label="t"><Ico :n="t" /></button>
    </div>

    <main class="work">
      <aside class="left">
        <div class="ptitle"><h2>Upravit konstrukci</h2><Ico n="dock" /><Ico n="x3" /></div>
        <div class="pbody">
          <div class="strip">
            <button v-for="(s, i) in side" :key="s" :class="{ on: !i }" :aria-label="s"><Ico :n="s" /><b v-if="!i" class="num n5">5</b></button>
          </div>
          <div class="panel">
            <div class="cmds">
              <button class="cmd marked" aria-label="OK"><Ico n="ok" /></button>
              <button class="cmd" aria-label="Zrušit"><Ico n="cancel" /></button>
              <button class="cmd" aria-label="Použít"><Ico n="apply" /></button>
              <span class="grow" />
              <button class="cmd f">F</button>
              <button class="cmd" aria-label="Informace"><Ico n="info" /></button>
              <button class="cmd slim" aria-label="Sbalit"><Ico n="fold" /></button>
            </div>

            <section class="box">
              <h3><i class="open" />Povinné</h3>
              <div class="row must">
                <label for="kon">Konstrukce</label>
                <span class="pickwrap"><b class="num n1">1</b><input id="kon" type="text" value="1 vybráno"></span>
                <Ico n="down2" /><Ico n="pick" />
              </div>
            </section>

            <section class="box">
              <h3><i class="open" />Profil<span class="grow" /><span class="chk mark"><b class="num n2">2</b><input type="checkbox" checked aria-label="Profil"></span></h3>
              <svg class="profile" width="124" height="106" viewBox="-4 0 124 106" fill="none" stroke="#111">
                <rect x="22" y="23" width="79" height="79" rx="9" stroke-width="1.800" />
                <rect x="29" y="30" width="65" height="65" rx="6" stroke-width="1.800" />
                <path d="M22 11v20M101 11v20M22 15h79M9 23h20M9 102h20M14 23v79M80 84h37" />
                <path d="M22 15l7-2v4zM101 15l-7-2v4zM14 23l-2 7h4zM14 102l-2-7h4zM94 84l-6-2v4zM102 84l6-2v4z" fill="#111" stroke="none" />
                <g fill="#111" stroke="none" font-family="Liberation Sans" font-size="13" font-weight="700"><text x="57" y="12">B</text><text x="108" y="82">T</text><text transform="translate(11 66) rotate(-90)">B</text></g>
              </svg>
              <div class="row"><label for="norm">Norma</label><input id="norm" class="ro" type="text" value="AS" disabled><b class="num n3">3</b></div>
              <div class="row"><label for="typ">Typ</label><input id="typ" class="ro" type="text" value="Čtvercové duté průřezy" disabled><button class="lib" aria-label="Knihovna profilů"><Ico n="book" /></button></div>
              <div class="row spec">
                <label for="spec">Specifikace</label>
                <div class="drop">
                  <select id="spec"><option>50X50X3.0 SHS</option></select><span class="dbtn"><i class="caret" /></span>
                  <div class="menu">
                    <ul role="listbox"><li v-for="s in specs" :key="s" role="option" :class="{ hot: s === '50X50X4.0 SHS' }">{{ s }}<b v-if="s === '50X50X4.0 SHS'" class="num n4">4</b></li></ul>
                    <div class="sb"><i class="au" /><i class="thumb t60" /><i class="caret" /></div>
                  </div>
                </div>
              </div>
            </section>

            <section class="box"><h3 class="solo"><i class="shut" />Transformovat profil</h3></section>

            <section class="box">
              <h3><i class="open" />Nastavení</h3>
              <div class="row opt"><label class="ck"><span class="chk"><input type="checkbox"></span>Materiál</label></div>
              <div class="row opt"><span>Název instance</span></div>
            </section>
          </div>
        </div>
      </aside>

      <section class="center">
        <div class="dtabs">
          <div class="dtab">Sestava002.Z3ASM<button aria-label="Zavřít kartu"><Ico n="tabx" /></button></div>
          <button class="add" aria-label="Nová karta"><Ico n="tabp" /></button>
          <span class="grow" />
          <button class="over" aria-label="Seznam karet"><Ico n="over" /></button>
        </div>
        <div class="view">
          <svg class="scene" viewBox="515 240 988 744" preserveAspectRatio="xMinYMin slice">
            <g v-for="(b, i) in beams" :key="i" stroke-linejoin="round">
              <path :d="`M${b[0]} ${b[1]}L${b[2]} ${b[3]}L${b[6]} ${b[7]}L${b[4]} ${b[5]}z`" :fill="b[12]" stroke="#0a0a0a" />
              <path :d="`M${b[4]} ${b[5]}L${b[6]} ${b[7]}L${b[10]} ${b[11]}L${b[8]} ${b[9]}z`" :fill="b[13]" stroke="#0a0a0a" />
              <path :d="`M${b[4]} ${b[5]}L${b[6]} ${b[7]}`" stroke="#0a0a0a" :stroke-width="seam[b[14]]" :stroke-dasharray="b[14] === 'dash' ? '2 1' : null" />
            </g>
            <path d="M810 696L1133 603" stroke="#0a0a0a" stroke-width="2" />
            <path d="M1428 503l4-1 12 4v6M1427 830v7M1420 830l7-1M522 447l-4 0v9M1153 265l-1 15M811 681l-2 7v8" fill="none" stroke="#0a0a0a" stroke-width="1.400" />

            <path d="M937 548l39 32 60-17-3 56-60 22-39-32z" fill="#c0a98a" fill-opacity=".14" />
            <path d="M934 609l60-17 31 26-52 23z" fill="#c0a080" fill-opacity=".22" />
            <path d="M934 609l3-61 39 32 60-17-3 54M934 609l60-17 31 26" fill="none" stroke="#b8782a" stroke-width="1.300" />
            <path d="M973 641l94-26" stroke="#7a6f86" stroke-width="1.500" />
            <path d="M1049 615l14 2-14 7z" fill="#5966b0" />
            <path d="M1078 609l14 0-12 5z" fill="#7c8578" />
            <path d="M975 580l4-50M922 600l-18-16" stroke="#b8782a" stroke-width="1.500" />
            <path d="M973 641l4-80" stroke="#5da52f" stroke-width="2" />
            <path d="M973 641l-51-41" stroke="#d04820" stroke-width="1.800" />
            <path d="M977 548l5 15h-9z" fill="#28a428" />
            <path d="M979 520l4 13h-7z" fill="#d08a1c" />
            <path d="M914 593l12 5-6 6z" fill="#d81818" />
            <path d="M897 579l10 2-4 7z" fill="#8a5a14" />

            <path d="M838 369l10-11 6 4 273 228-11 12z" fill="#8a938c" />
            <g stroke-linecap="butt" fill="none">
              <path d="M843 371L1118 600M852 363L1126 592" stroke="#9c9a70" stroke-width="3" />
              <path d="M845 369L1120 598M849 363L1124 593" stroke="#8798a8" stroke-width="3" />
              <path d="M846 365L1122 595" stroke="#e79a18" stroke-width="4" />
              <path d="M838 369L1117 601M850 359L1127 590" stroke="#e0981c" stroke-width="1.400" stroke-dasharray="2 1" />
              <path d="M1116 594l10-4 1 8-10 4zM1120 602l8-7" stroke="#f09a18" stroke-width="2" stroke-dasharray="3 1" />
            </g>
            <path d="M837 361l9-4 4 4-8 8-5 2z" fill="#f29c1c" />
            <path d="M835 359l9-3" stroke="#1c86ee" stroke-width="3" />
            <path d="M1121 595l6-2" stroke="#1c9cee" stroke-width="2" />

            <g class="axis" text-anchor="middle">
              <text x="980" y="514" fill="#a8701c">Y</text><text x="888" y="579" fill="#a8701c">X</text>
              <text x="561" y="855" fill="#f01010">X</text><text x="606" y="823" fill="#30c430">Y</text><text x="666" y="871" fill="#1414e8">Z</text>
            </g>
            <g stroke-width="2">
              <path d="M602 882l-30-25" stroke="#f01010" /><path d="M602 882l3-46" stroke="#30d030" /><path d="M602 882l44-12" stroke="#1414f0" />
            </g>
            <path d="M564 852l12 4-5 6z" fill="#c01818" /><path d="M605 825l4 12h-7z" fill="#208a20" /><path d="M659 865l-13 8-2-6z" fill="#1010b8" />
          </svg>
          <div class="vtools">
            <button v-for="t in viewTools" :key="t[0]" :class="{ wide: t[1] }" :aria-label="t[0]"><Ico :n="t[0]" /><i v-if="t[1]" class="caret" /></button>
            <span class="layer"><Ico n="v16" /><Ico n="v17" /><select disabled aria-label="Hladina"><option>Hladina000</option></select><i class="caret" /></span>
          </div>
          <p class="hint">Stiskněte &lt;Ctrl-Del&gt; pro zpět poslední výběr.</p>
          <p class="hint">&lt;Alt-výběr&gt; pro výběr entity za výběrem nejvíce vpředu.</p>
          <p class="scale">3590.42mm</p>
        </div>
      </section>

      <aside class="right">
        <div class="ptitle"><h2>Prohlížeč souborů</h2><Ico n="dock" /><Ico n="x3" /></div>
        <div class="pbody upper">
          <div class="files">
            <div class="fnav">
              <button disabled aria-label="Zpět"><Ico n="f1" /></button>
              <button disabled aria-label="Vpřed"><Ico n="f2" /></button>
              <button disabled aria-label="Nahoru"><Ico n="f3" /></button>
              <button aria-label="Obnovit"><Ico n="f4" /></button>
            </div>
            <ul class="tree">
              <li><Ico n="chev" /><Ico n="star" />Oblíbené</li>
              <li><Ico n="chev" /><Ico n="dir" />(C:)</li>
              <li /><li />
            </ul>
            <section class="box">
              <h3><i class="open" />Hledat</h3>
              <div class="search">
                <span class="combo"><input type="text" placeholder="Hledat..." aria-label="Hledat"><i class="caret" /></span>
                <button aria-label="Hledat"><Ico n="lens2" /></button>
                <button aria-label="Nástroje"><Ico n="plier" /></button>
              </div>
            </section>
            <section class="box"><h3 class="solo"><i class="shut" />Seznam souborů</h3></section>
            <section class="box"><h3 class="solo"><i class="shut" />Náhled</h3></section>
          </div>
          <div class="strip">
            <button v-for="(s, i) in rside" :key="s" :class="{ on: !i }" :aria-label="s"><Ico :n="s" /></button>
          </div>
        </div>
        <div class="ptitle out"><h2>Výstup</h2><Ico n="stop" /><Ico n="dock" /><Ico n="x3" /></div>
        <div class="log">
          <div class="lines"><p v-for="(o, i) in output" :key="i">{{ o }}</p></div>
          <div class="sb"><i class="au" /><i class="thumb tend" /><i class="caret" /></div>
        </div>
      </aside>
    </main>

    <footer class="status">
      <span class="grow" />
      <div class="sbtns">
        <button v-for="s in ['st1', 'st2', 'st3']" :key="s" class="lit" :aria-label="s"><Ico :n="s" /></button>
      </div>
      <div class="msg" />
    </footer>
  </div>
</template>

<style>
body { margin: 0; }
</style>

<style scoped>
.app { min-height: 100vh; display: flex; flex-direction: column; background: #e2e6e9; color: #222; font: 14px/20px "Open Sans", "Noto Sans", sans-serif; overflow: hidden; }
.app * { box-sizing: border-box; }
.defs { position: absolute; width: 0; height: 0; }
button, input, select { font: inherit; color: inherit; margin: 0; }
button { background: none; border: 0; padding: 0; display: flex; align-items: center; justify-content: center; }
svg { display: block; flex: none; }
h1, h2, h3, p, ul { margin: 0; padding: 0; font: inherit; list-style: none; }
.grow { flex: 1; }
.caret { width: 0; height: 0; flex: none; border: 4px solid transparent; border-top: 4px solid #444; border-bottom: 0; }
.lit { background: #ffe27a; border: 1px solid #c8962e; }

.title { display: flex; align-items: center; height: 33px; }
.logo { width: 29px; height: 24px; padding-left: 5px; border-right: 1px solid #b8bcc0; }
.quick { display: flex; padding-left: 7px; }
.quick button { width: 28px; height: 24px; }
.more { width: 18px; }
.back { width: 18px; margin-left: 2px; }
.menus { display: flex; gap: 18px; padding-left: 9px; }
.menus a { color: #111; text-decoration: none; }
.title h1 { flex: 1; text-align: center; color: #333; }
.win { display: flex; gap: 15px; padding-right: 8px; }

.tabs { display: flex; height: 27px; border-bottom: 1px solid #b8bfca; }
.filetab { width: 92px; height: 26px; background: #2a60b8; color: #fff; border: 1px solid #1747a0; }
.tablist { display: flex; gap: 1px; padding-left: 3px; flex: 1; }
.tablist button { height: 27px; padding: 0 10px; color: #444; white-space: nowrap; }
.tablist .on { background: #fcfdfd; border: 1px solid #b8bfca; border-bottom: 0; color: #333; }
.collapse { width: 28px; }
.find { display: flex; align-items: center; width: 180px; height: 24px; margin-left: 6px; background: #fff; border: 1px solid #b8bfca; padding-right: 6px; }
.find input { flex: 1; min-width: 0; border: 0; padding: 0 2px; background: none; outline: 0; }
input::placeholder { color: #777; opacity: 1; }
.corner { display: flex; align-items: center; gap: 8px; padding: 0 3px 0 11px; }
.help { gap: 7px; padding: 0 4px 0 2px; }

.ribbon { display: flex; height: 119px; background: #fcfdfd; border-bottom: 1px solid #b8bfca; }
.group { display: flex; flex-direction: column; border-right: 1px solid #d0d3d8; margin: 6px 0 2px; }
.tools { display: flex; justify-content: center; height: 88px; }
.tools button { flex-direction: column; justify-content: flex-start; white-space: nowrap; }
.pic { height: 41px; display: flex; align-items: center; margin-bottom: 2px; }
.cap { height: 20px; min-width: 8px; display: flex; align-items: center; justify-content: center; gap: 7px; }
.gname { text-align: center; color: #6b7280; line-height: 20px; }

.bar { display: flex; align-items: center; height: 33px; padding: 3px 0 0 4px; }
.grip { width: 3px; height: 20px; margin-right: 5px; border-left: 2px dotted #8a8f96; }
.tb { width: 28px; height: 26px; flex: none; }
.tb.lit { width: 27px; }
.sep { width: 1px; height: 20px; background: #b8bcc2; margin: 0 3px; }
.gapr { margin: 0 7px 0 1px; }
.combo { position: relative; display: flex; align-items: center; width: 166px; height: 26px; background: #fff; border: 1px solid #b8bfca; }
.combo select { appearance: none; flex: 1; min-width: 0; border: 0; background: none; padding: 0 4px; color: #111; opacity: 1; }
.combo .caret { margin-right: 6px; }
.combo.off { background: #efefef; border-color: #cdd3de; }
.combo.off select { color: #777; }
.combo.off .caret { border-top-color: #aaa; }

.work { display: flex; flex: 1; }
.left { display: flex; flex-direction: column; width: 513px; border-right: 1px solid #b8bfca; }
.ptitle { display: flex; align-items: center; height: 27px; padding: 1px 9px 0 5px; gap: 10px; color: #444; }
.ptitle h2 { flex: 1; }
.pbody { display: flex; flex: 1; border-top: 1px solid #b8bfca; border-bottom: 1px solid #b8bfca; }
.strip { display: flex; flex-direction: column; width: 40px; flex: none; border-right: 1px solid #b8bfca; }
.strip button { position: relative; height: 60px; padding-bottom: 4px; }
.strip .on { background: #fcfdfd; border-bottom: 1px solid #b8bfca; }
.panel { flex: 1; background: #dde1e9; padding: 0 5px 0 5px; }
.cmds { display: flex; gap: 3px; height: 36px; margin: 0 -5px; padding: 3px 4px 0 3px; background: #e2e6e9; }
.cmd { position: relative; width: 32px; height: 29px; background: #fcfdfd; border: 1px solid #b8bfca; }
.cmd.f { font: 19px/24px "Liberation Sans", sans-serif; }
.cmd.slim { width: 17px; }
.marked::after { content: ""; position: absolute; inset: -4px; border: 4px solid #ed1c24; }
.num { position: absolute; z-index: 3; color: #ed1c24; font: 700 18px/20px "Open Sans", "Noto Sans", sans-serif; }
.n5 { right: 0; top: -4px; }
.n1 { left: -24px; top: 2px; }
.n2 { left: -24px; top: -1px; }
.n3 { right: 18px; top: 4px; }
.n4 { left: -25px; top: 0; width: 16px; background: #c4c6c8; text-align: center; }

.box { border: 1px solid #b8bfca; margin-bottom: 2px; }
.box h3 { display: flex; align-items: center; height: 29px; background: #fcfdfd; border-bottom: 1px solid #b8bfca; padding: 0 14px 0 4px; font-weight: 700; color: #333; }
.box h3.solo { height: 28px; border-bottom: 0; }
.open { border: 5px solid transparent; border-top: 10px solid #555; border-bottom: 0; margin-right: 7px; }
.shut { border: 5px solid transparent; border-left: 9px solid #555; border-right: 0; margin: 0 7px 0 1px; }
.row { position: relative; display: flex; align-items: center; height: 31px; padding-left: 10px; color: #111; }
.row > label { width: 168px; flex: none; }
.row.must { height: 36px; }
.row.must svg { margin-left: 8px; }
.row.must svg + svg { margin-left: 13px; }
.pickwrap { position: relative; width: 214px; }
.pickwrap input { width: 100%; height: 28px; border: 2px solid #1586e8; background: #fff; padding: 0 3px; display: block; outline: 0; }
.pickwrap::after { content: ""; position: absolute; inset: -6px -7px; border: 5px solid #ed1c24; pointer-events: none; z-index: 2; }
.chk { position: relative; display: block; width: 16px; height: 16px; flex: none; }
.chk input { appearance: none; display: block; width: 16px; height: 16px; background: #cfd5de; border: 1px solid #8c9198; box-shadow: inset 0 0 0 2px #eef0f3; }
.mark::after { content: ""; position: absolute; inset: -7px -6px; border: 4px solid #ed1c24; z-index: 2; }
.mark::before { content: ""; position: absolute; left: 6px; top: 2px; width: 4px; height: 9px; border: solid #3f6795; border-width: 0 2px 2px 0; transform: rotate(38deg); z-index: 1; }
.profile { display: block; margin: 9px auto 7px 165px; }
.ro { width: 269px; height: 27px; border: 1px solid #b8bfca; background: #f0f0f0; color: #777; padding: 0 3px; }
.lib { position: absolute; right: 6px; top: -2px; width: 36px; height: 34px; border: 5px solid #ed1c24; background: #f0f0f0; z-index: 2; }
.row.spec { height: 28px; align-items: flex-start; }
.row.spec label { line-height: 26px; }
.drop { position: relative; display: flex; width: 270px; height: 25px; background: #fff; }
.drop select { appearance: none; flex: 1; border: 0; background: none; padding: 0 4px; color: #111; }
.dbtn { width: 22px; display: flex; align-items: center; justify-content: center; background: #ffe27a; border: 1px solid #c8962e; }
.menu { position: absolute; z-index: 2; left: 0; top: 25px; width: 271px; display: flex; background: #fff; border: 1px solid #b8bfca; box-shadow: 3px 3px 2px #0005; }
.menu ul { flex: 1; }
.menu li { position: relative; line-height: 20px; padding-left: 3px; }
.menu .hot { background: #0078d7; color: #fff; box-shadow: inset 0 0 0 2px #ed1c24; }
.sb { width: 21px; display: flex; flex-direction: column; align-items: center; justify-content: space-between; background: #dde1e9; padding: 9px 0; }
.au { border: 4px solid transparent; border-bottom: 5px solid #444; border-top: 0; }
.sb .caret { border-top-width: 5px; }
.thumb { width: 18px; height: 24px; background: repeating-linear-gradient(#888 0 1px, #f4f5f6 1px 3px) center / 8px 8px no-repeat #f4f5f6; border: 1px solid #8f969e; }
.t60 { margin-bottom: 48px; }
.tend { margin: 50px 0 0; }
.row.opt { height: 32px; }
.row.opt:last-child { margin-bottom: 3px; }
.ck { display: flex; align-items: center; gap: 6px; }

.center { flex: 1; display: flex; flex-direction: column; padding: 0 2px; min-width: 0; }
.dtabs { display: flex; align-items: center; height: 27px; }
.dtab { display: flex; align-items: center; gap: 8px; width: 203px; height: 27px; padding-left: 38px; white-space: nowrap; background: #fcfdfd; border: 1px solid #b8bfca; border-bottom: 0; color: #111; }
.add { margin-left: 8px; }
.over { margin-right: 6px; }
.view { position: relative; flex: 1; min-height: 700px; background: linear-gradient(#fff, #9e9e9e); border-top: 1px solid #b8bfca; border-bottom: 1px solid #b8bfca; overflow: hidden; color: #111; }
.scene { position: absolute; inset: 0; width: 100%; height: 100%; }
.axis { font: 20px "Liberation Sans", sans-serif; }
.vtools { position: relative; display: flex; align-items: center; justify-content: center; height: 28px; padding-top: 2px; }
.vtools button { width: 28px; height: 26px; }
.vtools .wide { width: 44px; gap: 6px; justify-content: flex-end; padding-right: 3px; }
.layer { display: flex; align-items: center; gap: 5px; width: 144px; height: 26px; margin-left: 6px; padding: 0 7px 0 10px; background: #efefef; border: 1px solid #cdd3de; }
.layer select { appearance: none; border: 0; background: none; width: 82px; padding: 0; color: #888; opacity: 1; }
.layer .caret { border-top-color: #aaa; }
.hint { position: relative; padding-left: 21px; margin-bottom: 6px; }
.scale { position: absolute; left: 5px; bottom: 0; font-size: 19px; line-height: 24px; }

.right { display: flex; flex-direction: column; width: 412px; border-left: 1px solid #b8bfca; }
.right .ptitle { padding: 1px 7px 0 4px; }
.upper { border-bottom: 0; }
.files { flex: 1; background: #dde1e9; border-bottom: 1px solid #b8bfca; border-left: 1px solid #b8bfca; padding: 0 1px 0 0; }
.right .strip { width: 37px; border-right: 0; border-left: 1px solid #b8bfca; }
.fnav { display: flex; gap: 4px; height: 34px; padding: 1px 0 2px; background: #e2e6e9; }
.fnav button { width: 35px; height: 31px; background: #fcfdfd; border: 1px solid #b8bfca; }
.fnav button:disabled { background: #eff0f1; border-color: #d2d5d9; }
.tree { border: 1px solid #b8bfca; background: #fff; margin-bottom: 8px; height: 87px; overflow: hidden; }
.tree li { display: flex; align-items: center; height: 23px; padding-left: 6px; color: #111; }
.tree li svg + svg { margin: 0 4px 0 8px; }
.tree li:nth-child(even) { background: #f5f5f5; }
.search { display: flex; gap: 4px; padding: 3px 2px 2px; height: 36px; }
.search .combo { flex: 1; height: 31px; }
.search input { flex: 1; min-width: 0; border: 0; background: none; padding: 0 4px; outline: 0; }
.search button { width: 47px; height: 31px; background: #fcfdfd; border: 1px solid #b8bfca; }
.right .ptitle.out { height: 29px; }
.log { display: flex; height: 121px; background: #fff; border: 1px solid #b8bfca; margin-bottom: 1px; }
.lines { flex: 1; height: 119px; overflow: hidden; display: flex; flex-direction: column; justify-content: flex-end; padding: 0 4px 3px; color: #111; }
.lines p { flex: none; }
.status { display: flex; height: 30px; }
.sbtns { display: flex; gap: 9px; padding: 4px 9px 0 18px; border-left: 1px solid #85898d; }
.sbtns button { width: 26px; height: 25px; }
.msg { width: 437px; margin-top: 3px; background: #fff; border: 1px solid #b8bfca; border-bottom: 0; }
</style>
